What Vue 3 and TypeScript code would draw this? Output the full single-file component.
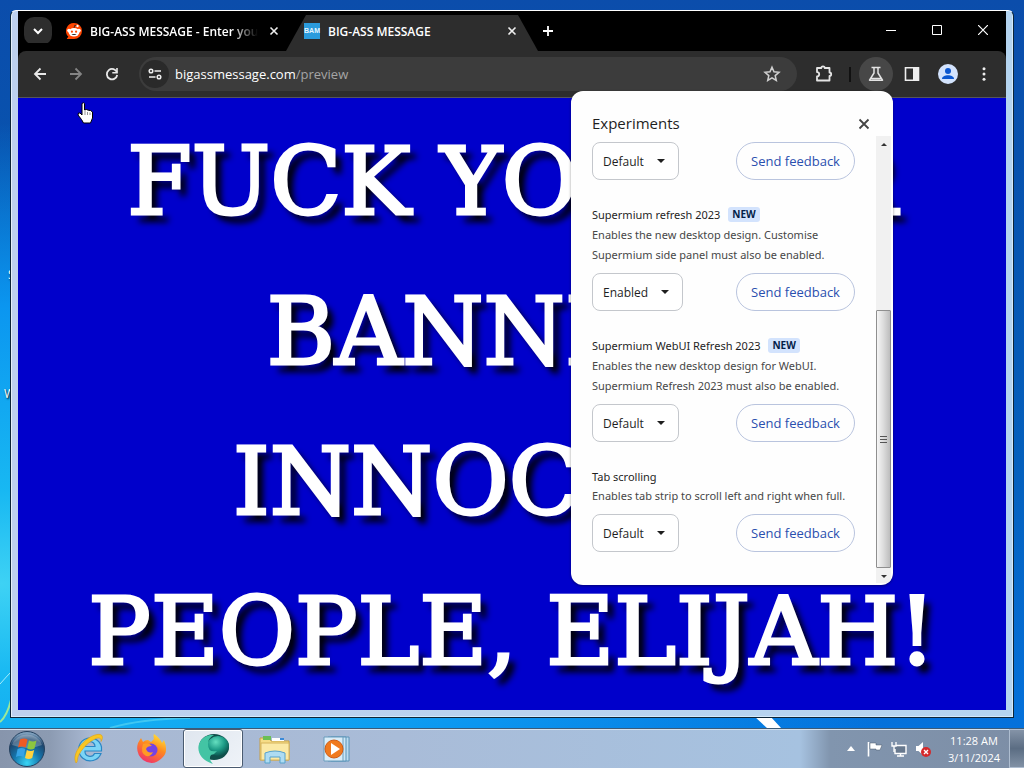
<script setup lang="ts">
interface Experiment {
  id: string
  title: string
  isNew: boolean
  description: string
  value: string
}

const options: string[] = ['Default', 'Enabled', 'Disabled']

const experiments: Experiment[] = [
  { id: 'first', title: '', isNew: false, description: '', value: 'Default' },
  {
    id: 'refresh',
    title: 'Supermium refresh 2023',
    isNew: true,
    description: 'Enables the new desktop design. Customise Supermium side panel must also be enabled.',
    value: 'Enabled',
  },
  {
    id: 'webui',
    title: 'Supermium WebUI Refresh 2023',
    isNew: true,
    description: 'Enables the new desktop design for WebUI. Supermium Refresh 2023 must also be enabled.',
    value: 'Default',
  },
  {
    id: 'tabs',
    title: 'Tab scrolling',
    isNew: false,
    description: 'Enables tab strip to scroll left and right when full.',
    value: 'Default',
  },
]

const message: string[] = ['FUCK YOU FOR', 'BANNING', 'INNOCENT', 'PEOPLE, ELIJAH!']
</script>

<template>
  <div class="desktop">
    <svg class="wallpaper" viewBox="0 0 1024 768" preserveAspectRatio="none" aria-hidden="true">
      <path d="M0 722 Q7 716 11 700" stroke="#9be89a" stroke-width="2" fill="none" />
      <path d="M0 684 Q7 676 11 672" stroke="#a5ecfb" stroke-width="1" fill="none" />
      <path d="M754 716h16l12 13h-14z" fill="#fff" />
      <path d="M110 728 Q140 719 190 718" stroke="#5fd8f4" stroke-width="2" fill="none" opacity=".6" />
    </svg>
    <span class="desk-label label-a" aria-hidden="true">S</span>
    <span class="desk-label label-b" aria-hidden="true">W</span>

    <main class="window">
      <header class="tab-strip">
        <button class="tab-search" aria-label="Search tabs">
          <svg width="12" height="12" viewBox="0 0 12 12"><path d="M2 4l4 4 4-4" stroke="#fff" stroke-width="2" fill="none" /></svg>
        </button>
        <div class="tab">
          <svg width="16" height="16" viewBox="0 0 16 16">
            <path d="M8 0a8 8 0 1 1 0 16H1.500q-1 0-.4-.8l1.300-1.500A8 8 0 0 1 8 0z" fill="#ff4500" />
            <circle cx="3" cy="7.500" r="1.800" fill="#fff" /><circle cx="13" cy="7.500" r="1.800" fill="#fff" />
            <ellipse cx="8" cy="9.200" rx="5.400" ry="4.200" fill="#fff" />
            <path d="M8 5l.8-2.800 2.500.6" stroke="#222" stroke-width=".8" fill="none" /><circle cx="11.500" cy="3" r="1.200" fill="#fff" />
            <circle cx="5.900" cy="8.700" r="1.100" fill="#ff4500" /><circle cx="10.100" cy="8.700" r="1.100" fill="#ff4500" />
            <path d="M5.500 11h5a2.700 1.800 0 0 1-5 0z" fill="#222" />
          </svg>
          <span class="tab-title fade">BIG-ASS MESSAGE - Enter your</span>
          <button class="tab-close" aria-label="Close tab">
            <svg width="10" height="10" viewBox="0 0 10 10"><path d="M1.500 1.500l7 7m0-7l-7 7" stroke="#eee" stroke-width="1.600" /></svg>
          </button>
        </div>
        <div class="tab active">
          <span class="favicon" aria-hidden="true">BAM</span>
          <span class="tab-title">BIG-ASS MESSAGE</span>
          <button class="tab-close" aria-label="Close tab">
            <svg width="10" height="10" viewBox="0 0 10 10"><path d="M1.500 1.500l7 7m0-7l-7 7" stroke="#eee" stroke-width="1.600" /></svg>
          </button>
        </div>
        <button class="new-tab" aria-label="New tab">
          <svg width="12" height="12" viewBox="0 0 12 12"><path d="M6 1v10M1 6h10" stroke="#fff" stroke-width="1.800" /></svg>
        </button>
        <div class="window-controls">
          <button aria-label="Minimize"><svg width="10" height="10" viewBox="0 0 10 10"><path d="M0 5.500h10" stroke="#fff" /></svg></button>
          <button aria-label="Maximize"><svg width="10" height="10" viewBox="0 0 10 10"><path d="M.5.5h9v9h-9z" stroke="#fff" fill="none" /></svg></button>
          <button aria-label="Close"><svg width="10" height="10" viewBox="0 0 10 10"><path d="M0 0l10 10M10 0L0 10" stroke="#fff" stroke-width="1.200" /></svg></button>
        </div>
      </header>

      <nav class="toolbar" aria-label="Browser toolbar">
        <button class="tool" aria-label="Back"><svg width="16" height="16" viewBox="0 0 16 16"><path d="M14 8H3m5.500-5.500L3 8l5.500 5.500" stroke="#e8e8e8" stroke-width="1.800" fill="none" /></svg></button>
        <button class="tool" aria-label="Forward"><svg width="16" height="16" viewBox="0 0 16 16"><path d="M2 8h11M7.500 2.500L13 8l-5.500 5.500" stroke="#858585" stroke-width="1.800" fill="none" /></svg></button>
        <button class="tool" aria-label="Reload"><svg width="16" height="16" viewBox="0 0 16 16"><path d="M13 6.500A5.200 5.200 0 1 0 13.200 9" stroke="#e8e8e8" stroke-width="1.800" fill="none" /><path d="M13.800 2v5.500H8.300V6H12.200V2z" fill="#e8e8e8" /></svg></button>
        <div class="omnibox">
          <button class="site-info" aria-label="Site information">
            <svg width="16" height="16" viewBox="0 0 16 16" fill="none" stroke="#eee" stroke-width="1.500"><circle cx="4" cy="5" r="1.800" /><path d="M7.500 5H14M2 11h6.500" /><circle cx="12" cy="11" r="1.800" /></svg>
          </button>
          <a class="url" href="#">bigassmessage.com<span>/preview</span></a>
          <button class="tool" aria-label="Bookmark this page"><svg width="18" height="18" viewBox="0 0 18 18"><path d="M9 2.200l2 4.600 5 .5-3.800 3.300 1.100 4.900L9 12.900l-4.300 2.600 1.100-4.900L2 7.300l5-.5z" stroke="#d0d0d0" stroke-width="1.500" fill="none" /></svg></button>
        </div>
        <button class="tool" aria-label="Extensions"><svg width="18" height="18" viewBox="0 0 18 18"><path d="M2 3h4.300a1.700 1.700 0 0 1 3.400 0H14.500V7.500a1.700 1.700 0 0 1 0 3.400V15.500H2V11.500a2.200 2.200 0 0 0 0-4.400z" stroke="#e4e4e4" stroke-width="1.800" stroke-linejoin="round" fill="none" /></svg></button>
        <span class="divider"></span>
        <button class="tool lit" aria-label="Experiments"><svg width="18" height="18" viewBox="0 0 18 18"><path d="M4.500 2.500h9M7 3v5L2.500 15.200h13L11 8V3M4.500 13.500h9" stroke="#e4e4e4" stroke-width="1.500" stroke-linejoin="round" fill="none" /></svg></button>
        <button class="tool" aria-label="Side panel"><svg width="16" height="16" viewBox="0 0 16 16"><path d="M1.500 1.800h13v12.400h-13z" stroke="#eee" stroke-width="1.600" fill="none" /><path d="M9 2h6v12H9z" fill="#eee" /></svg></button>
        <button class="tool" aria-label="Profile"><svg width="20" height="20" viewBox="0 0 20 20"><circle cx="10" cy="10" r="10" fill="#d3e3fd" /><circle cx="10" cy="7" r="3" fill="#0b57d0" /><path d="M4 15c0-5 12-5 12 0z" fill="#0b57d0" /></svg></button>
        <button class="tool" aria-label="Menu"><svg width="16" height="16" viewBox="0 0 16 16" fill="#eee"><circle cx="8" cy="2.800" r="1.500" /><circle cx="8" cy="8" r="1.500" /><circle cx="8" cy="13.200" r="1.500" /></svg></button>
      </nav>

      <section class="page">
        <h1><span v-for="line in message" :key="line">{{ line }}</span></h1>
      </section>

      <aside class="popup" aria-labelledby="popup-title">
        <header class="popup-head">
          <h2 id="popup-title">Experiments</h2>
          <button aria-label="Close"><svg width="12" height="12" viewBox="0 0 12 12"><path d="M1.500 1.500l9 9m0-9l-9 9" stroke="#444" stroke-width="1.800" /></svg></button>
        </header>
        <div class="popup-body">
          <div class="experiments">
            <article v-for="item in experiments" :key="item.id">
              <h3 v-if="item.title" :class="{ tagged: item.isNew }">
                <label :for="item.id">{{ item.title }}</label>
                <span v-if="item.isNew" class="badge">NEW</span>
              </h3>
              <p v-if="item.description">{{ item.description }}</p>
              <div class="controls">
                <div class="picker">
                  <select :id="item.id" :value="item.value" :aria-label="item.title || 'Experiment'">
                    <option v-for="option in options" :key="option">{{ option }}</option>
                  </select>
                  <svg width="8" height="4" viewBox="0 0 8 4"><path d="M0 0h8L4 4z" fill="#1f1f1f" /></svg>
                </div>
                <button class="feedback">Send feedback</button>
              </div>
            </article>
          </div>
          <div class="scrollbar" aria-hidden="true">
            <svg width="6" height="3" viewBox="0 0 6 3"><path d="M3 0l3 3H0z" fill="#333" /></svg>
            <div class="thumb"><i></i><i></i><i></i></div>
            <svg width="6" height="3" viewBox="0 0 6 3"><path d="M0 0h6L3 3z" fill="#333" /></svg>
          </div>
        </div>
      </aside>
    </main>

    <footer class="taskbar">
      <button class="start" aria-label="Start">
        <svg width="38" height="38" viewBox="0 0 38 38">
          <defs>
            <radialGradient id="orb" cx=".5" cy=".9" r=".85"><stop offset="0" stop-color="#39d5f5" /><stop offset=".45" stop-color="#1576ad" /><stop offset=".8" stop-color="#1d456c" /><stop offset="1" stop-color="#7fa0bd" /></radialGradient>
          </defs>
          <circle cx="19" cy="19" r="17.500" fill="url(#orb)" stroke="#24405e" />
          <path d="M4 15a15.500 14 0 0 1 30 0q-14 6-30 0z" fill="#fff" opacity=".25" />
          <path d="M12 9.500q4-2 7.500 0l-1.800 8q-4-2-7.700 0z" fill="#ee5a24" />
          <path d="M21 10.500q4 2 7.500 0l-2 8q-3.500 2-7.300 0z" fill="#8cc63f" />
          <path d="M9.600 19q4-2 7.700 0l-1.800 8q-4-2-7.500 0z" fill="#35a3e6" />
          <path d="M18.800 20q4 2 7.400 0l-2 8q-3.500 2-7.200 0z" fill="#ffd23e" />
        </svg>
      </button>
      <div class="apps">
        <button aria-label="Internet Explorer">
          <svg width="32" height="32" viewBox="0 0 32 32">
            <path d="M28 20.500A11.500 11.500 0 1 1 28.500 14V18H12a5 5 0 0 0 9.500 2.500zM12.200 13.500H22a4.900 4.900 0 0 0-9.800 0z" fill="#7bd4f6" stroke="#2b86c4" stroke-width="1.200" />
            <path d="M3 30C-2 21 11 4 24 1.500c6-1 6.500 3 4 7 .5-3.500-2-4.500-6-2.500C13 10 5 21 4.500 26q0 3-1.500 4z" fill="#f8c622" stroke="#dc9e1a" stroke-width=".6" />
          </svg>
        </button>
        <button aria-label="Firefox">
          <svg width="32" height="32" viewBox="0 0 32 32">
            <defs><linearGradient id="fox" x1=".8" y1="0" x2=".3" y2="1"><stop offset="0" stop-color="#ffe83b" /><stop offset=".45" stop-color="#ff8a1e" /><stop offset="1" stop-color="#f0306c" /></linearGradient></defs>
            <path d="M19 1q6 4 8 9l2-3q5 12-2 18-9 9-19 2-8-7-5-17l3-5 2 4q2-2 5-2l3 2 3-3q-1-3 0-5z" fill="url(#fox)" />
            <circle cx="16" cy="17" r="6.500" fill="#7542e5" />
            <path d="M8 11q6-2 9 2-5 0-6 3 2 5 7 3-2 5-7 4-6-3-3-12z" fill="#ff9a24" />
          </svg>
        </button>
        <button class="current" aria-label="Supermium">
          <svg width="34" height="34" viewBox="0 0 34 34">
            <defs><radialGradient id="sup" cx=".4" cy=".3" r=".8"><stop offset="0" stop-color="#65dfc0" /><stop offset=".5" stop-color="#1d9b86" /><stop offset="1" stop-color="#063f3e" /></radialGradient></defs>
            <ellipse cx="18" cy="15" rx="15" ry="13" fill="#104f4b" />
            <ellipse cx="22" cy="14" rx="11" ry="10" fill="url(#sup)" />
            <path d="M14 3C-1 6-3 26 17 32q-5-5-2-9 4-1 6-4-9 2-9-7 0-6 6-9z" fill="#43c4a4" />
          </svg>
        </button>
        <button aria-label="Windows Explorer">
          <svg width="34" height="32" viewBox="0 0 34 32">
            <path d="M2 5h9l2 3h18v19H2z" fill="#f5dc86" stroke="#c79f45" />
            <path d="M5 3h8v4H5z" fill="#6abf55" /><path d="M14 5h12v3H14z" fill="#fff" /><path d="M22 5h4v2h-4z" fill="#3b8ad8" />
            <path d="M3 10h28v17H3z" fill="#fbe9a5" stroke="#d6b45c" />
            <path d="M7 30V20q10-4 20 0v10h-5v-6H12v6z" fill="#aedcf2" stroke="#57a2cd" />
          </svg>
        </button>
        <button aria-label="Windows Media Player">
          <svg width="32" height="32" viewBox="0 0 32 32">
            <path d="M10 4h18v24H10z" fill="#bcdcf0" stroke="#5a94b8" /><path d="M7 4h18v24H7z" fill="#cce6f5" stroke="#5a94b8" /><path d="M3 4h19v24H3z" fill="#d9edf8" stroke="#6b9dbd" />
            <circle cx="13" cy="16" r="9" fill="#f07a1e" stroke="#cf5b14" /><path d="M10 10l9 6-9 6z" fill="#fff" />
          </svg>
        </button>
      </div>
      <div class="tray">
        <button aria-label="Show hidden icons"><svg width="8" height="5" viewBox="0 0 8 5"><path d="M4 0l4 5H0z" fill="#fff" /></svg></button>
        <button aria-label="Action Center"><svg width="16" height="16" viewBox="0 0 16 16"><path d="M1.500 1v14.500" stroke="#fff" stroke-width="1.600" /><path d="M3 2h6v2h6l-2 5H9V8H3z" fill="#fff" stroke="#4b596b" stroke-width=".5" /></svg></button>
        <button aria-label="Network"><svg width="16" height="16" viewBox="0 0 16 16"><path d="M5 4.500h10v8H4V8M6 15h7M9.500 12v3" stroke="#fff" stroke-width="1.400" fill="#68798e" /><path d="M1 1v4h4V1M3 5v6" stroke="#fff" stroke-width="1.300" fill="none" /></svg></button>
        <button aria-label="Volume"><svg width="16" height="16" viewBox="0 0 16 16"><path d="M1 5h2.500L8 1v13l-4.500-4H1z" fill="#fff" /><circle cx="11" cy="11" r="5" fill="#d5292b" /><path d="M9 9l4 4m0-4l-4 4" stroke="#fff" stroke-width="1.400" /></svg></button>
        <time class="clock">11:28 AM<br />3/11/2024</time>
        <button class="show-desktop" aria-label="Show desktop"></button>
      </div>
    </footer>

    <svg class="cursor" width="17" height="22" viewBox="0 0 17 22" aria-hidden="true">
      <path d="M5 1.500Q6.500 0 7.500 1.500V8l2-.5 2 .8 2 .2 2 1.500v6l-2 5H6.500l-2-3.500L1 13l.5-2L3 11l2 2z" fill="#fff" stroke="#000" />
      <path d="M8 9v4M10.500 10v3M13 10.500V13" stroke="#666" stroke-width=".7" />
    </svg>
  </div>
</template>

<style>
body {
  margin: 0;
}
</style>

<style scoped>
.desktop {
  position: relative;
  display: flex;
  flex-direction: column;
  box-sizing: border-box;
  min-height: 100vh;
  background:
    radial-gradient(ellipse 90% 60% at 0 76%, #3ed2f4 0, #18b8f2 20%, #0b96f0 60%, #0b96f000 100%),
    linear-gradient(to bottom, #0b4dab, #0852ae 20%, #0560bd 60%, #0474e0);
  font-family: "Open Sans", "Noto Sans", sans-serif;
  font-size: 12px;
  overflow: hidden;
}

button {
  display: flex;
  align-items: center;
  justify-content: center;
  padding: 0;
  border: 0;
  background: none;
  font: inherit;
}

svg {
  flex: none;
}

.wallpaper {
  position: absolute;
  inset: 0;
  width: 100%;
  height: 100%;
}

.desk-label {
  position: absolute;
  left: 4px;
  color: #fff;
  text-shadow: 1px 1px 2px #000;
}

.label-a {
  top: 266px;
  left: 8px;
}

.label-b {
  top: 385px;
}

.window {
  position: relative;
  display: flex;
  flex: 1;
  flex-direction: column;
  margin: 10px;
  padding: 0 7px 7px;
  border: 1px solid #0d2538;
  border-top-color: #fff;
  border-radius: 6px 6px 0 0;
  background: linear-gradient(to right, #bdd0ee, #b4d4f0);
  box-shadow: inset 1px 0 #e4effb, inset -1px -1px #d3e9fb;
}

.tab-strip {
  display: flex;
  align-items: center;
  height: 40px;
  background: #000;
  color: #fff;
}

.tab-search {
  width: 28px;
  height: 28px;
  margin-left: 6px;
  border-radius: 10px;
  background: #2d2d2d;
}

.tab {
  display: flex;
  align-items: center;
  gap: 8px;
  box-sizing: border-box;
  width: 234px;
  height: 36px;
  padding: 0 4px 4px 14px;
  font-weight: 600;
  align-self: flex-end;
}

.tab.active {
  width: 252px;
  padding: 0 18px 4px;
  background: #2d2d2d;
  clip-path: polygon(0 100%, 20px 0, calc(100% - 20px) 0, 100% 100%);
}

.favicon {
  width: 16px;
  background: #2b9bdc;
  color: #e4f5ff;
  font: 700 7px/16px "Liberation Sans", sans-serif;
  text-align: center;
}

.tab-title {
  flex: 1;
  overflow: hidden;
  white-space: nowrap;
}

.fade {
  mask-image: linear-gradient(to right, #000 84%, transparent);
}

.tab-close {
  width: 16px;
  height: 16px;
}

.new-tab {
  width: 20px;
  height: 28px;
}

.window-controls {
  display: flex;
  align-self: stretch;
  margin-left: auto;
}

.window-controls button {
  width: 46px;
  height: 38px;
}

.toolbar {
  display: flex;
  align-items: center;
  gap: 2px;
  height: 46px;
  padding: 0 5px;
  border-bottom: 1px solid #55555c;
  border-radius: 8px 8px 0 0;
  background: #2d2d2d;
  box-shadow: 0 -8px #000;
}

.tool {
  width: 34px;
  height: 34px;
  border-radius: 50%;
}

.lit {
  background: #474747;
}

.omnibox {
  display: flex;
  flex: 1;
  align-items: center;
  height: 34px;
  margin: 0 8px;
  padding: 0 8px 0 2px;
  border-radius: 17px;
  background: #3c3c3c;
}

.site-info {
  width: 28px;
  height: 28px;
  border-radius: 50%;
  background: #2a2a2a;
}

.url {
  flex: 1;
  padding-left: 6px;
  color: #fff;
  font-size: 13px;
  text-decoration: none;
}

.url span {
  color: #a5a5a5;
}

.divider {
  width: 2px;
  height: 15px;
  margin: 0 6px;
  background: #111;
}

.page {
  flex: 1;
  padding: 9px 0 3px;
  background: #0000cb;
}

h1 {
  margin: 0;
  color: #fff;
  font: 400 93px/150px "DejaVu Serif", serif;
  text-align: center;
  text-shadow: 7px 8px 6px #000;
  -webkit-text-stroke: 3px #fff;
}

h1 span {
  display: block;
  white-space: nowrap;
}

.popup {
  position: absolute;
  top: 80px;
  right: 120px;
  box-sizing: border-box;
  width: 322px;
  padding: 20px 2px 2px 21px;
  border-radius: 12px;
  background: #fefefe;
  box-shadow: 0 1px 3px #0006;
  color: #1f1f1f;
  overflow: hidden;
}

.popup-head {
  display: flex;
  align-items: center;
  justify-content: space-between;
  height: 25px;
  padding-right: 21px;
}

h2 {
  margin: 0;
  font-size: 15px;
  font-weight: 400;
  line-height: 25px;
}

.popup-head button {
  width: 12px;
  height: 20px;
}

.popup-body {
  display: flex;
  justify-content: space-between;
}

.experiments {
  display: flex;
  flex-direction: column;
  gap: 24px;
  width: 263px;
  padding: 6px 0 31px;
}

h3 {
  display: flex;
  align-items: center;
  height: 20px;
  margin: 0;
  font-family: "Noto Sans", sans-serif;
  font-size: 11px;
  font-weight: 400;
}

h3.tagged {
  height: 21px;
}

.badge {
  margin-left: 8px;
  padding: 0 4px;
  border-radius: 3px;
  background: #d3e3fd;
  color: #041e49;
  font-size: 10px;
  font-weight: 700;
  line-height: 15px;
}

p {
  margin: 0 0 8px;
  color: #474747;
  font-family: "Noto Sans", sans-serif;
  font-size: 11px;
  line-height: 20px;
}

.controls {
  display: flex;
  justify-content: space-between;
}

.picker {
  position: relative;
  display: flex;
}

.picker svg {
  position: absolute;
  top: 17px;
  right: 14px;
  pointer-events: none;
}

select {
  appearance: none;
  field-sizing: content;
  box-sizing: border-box;
  height: 38px;
  padding: 0 34px 0 10px;
  border: 1px solid #c4c7cc;
  border-radius: 8px;
  background: #fff;
  color: #1f1f1f;
  font: inherit;
}

.feedback {
  box-sizing: border-box;
  width: 119px;
  height: 38px;
  border: 1px solid #b9c4de;
  border-radius: 19px;
  color: #2a4fae;
  font-size: 13px;
  font-weight: 500;
}

.scrollbar {
  display: flex;
  flex-direction: column;
  align-items: center;
  justify-content: space-between;
  box-sizing: border-box;
  width: 15px;
  padding: 7px 0 5px;
  background: #f1f1f1;
}

.thumb {
  display: flex;
  flex-direction: column;
  align-items: center;
  justify-content: center;
  gap: 1px;
  box-sizing: border-box;
  width: 15px;
  height: 258px;
  margin: auto 0 7px;
  border: 1px solid #8f8f8f;
  border-radius: 1px;
  background: linear-gradient(to right, #f6f6f6, #dcdcdc 50%, #bdbdbd);
}

.thumb i {
  width: 7px;
  height: 1px;
  border-bottom: 1px solid #555;
}

.taskbar {
  position: relative;
  display: flex;
  align-items: center;
  box-sizing: border-box;
  height: 40px;
  border-top: 1px solid #3c5b78;
  background: linear-gradient(to right, #8795ac 0, #8c9bb2 50px, #a8b8d2 90px, #a9bcd8 400px, #a6c2e0 800px, #8195ae 830px, #7d8ea6);
  box-shadow: inset 0 1px #d4e2f0;
}

.start {
  width: 54px;
}

.apps {
  display: flex;
  gap: 2px;
  margin-left: 5px;
}

.apps button {
  box-sizing: border-box;
  width: 60px;
  height: 39px;
}

.apps .current {
  border: 1px solid #4a5b70;
  border-radius: 3px;
  background: linear-gradient(135deg, #dfe6ef, #eff3f8);
  box-shadow: inset 0 0 0 1px #fff;
}

.tray {
  display: flex;
  align-items: center;
  gap: 8px;
  height: 100%;
  margin-left: auto;
  color: #fff;
}

.tray button:first-child {
  margin-right: 4px;
}

.clock {
  margin: 0 1px 0 9px;
  font-size: 11px;
  line-height: 17px;
  text-align: center;
}

.show-desktop {
  width: 15px;
  height: 100%;
  border: 1px solid #aebdd0;
  border-right: 0;
  background: linear-gradient(#8493a7, #5b6d83 50%, #8191a5);
}

.cursor {
  position: absolute;
  top: 102px;
  left: 77px;
}
</style>
